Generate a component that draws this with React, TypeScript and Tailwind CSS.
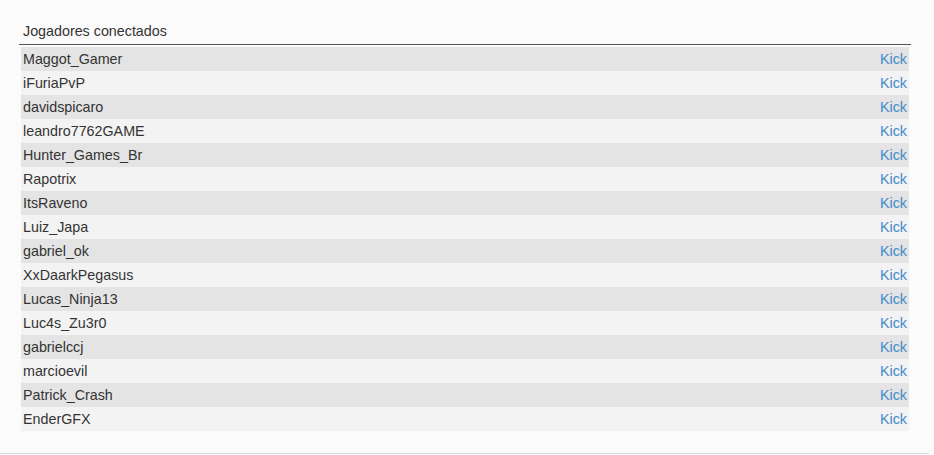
import React from "react";

const players = [
  "Maggot_Gamer",
  "iFuriaPvP",
  "davidspicaro",
  "leandro7762GAME",
  "Hunter_Games_Br",
  "Rapotrix",
  "ItsRaveno",
  "Luiz_Japa",
  "gabriel_ok",
  "XxDaarkPegasus",
  "Lucas_Ninja13",
  "Luc4s_Zu3r0",
  "gabrielccj",
  "marcioevil",
  "Patrick_Crash",
  "EnderGFX",
];

export default function App() {
  return (
    <div
      className="w-[934px] h-[455px] bg-[#fbfbfb] text-[#333] overflow-hidden"
      style={{ fontFamily: '"Liberation Sans", Arial, sans-serif' }}
    >
      <div className="w-[929px] h-[454px] border-b border-[#dcdcdc] pt-[21px]">
        <div className="ml-[19px] w-[892px]">
          <div className="px-[4px] h-[24px] leading-[20px] text-[14.3px] border-b border-[#555]">
            Jogadores conectados
          </div>
          <div className="mx-[2px] mt-[2px] flex flex-col">
            {players.map((p, i) => (
              <div
                key={p}
                className={`flex justify-between items-center h-[24px] px-[2px] text-[14.3px] leading-[20px] ${
                  i % 2 === 0 ? "bg-[#e4e4e4]" : "bg-[#f3f3f3]"
                }`}
              >
                <span>{p}</span>
                <span className="text-[#428bca]">Kick</span>
              </div>
            ))}
          </div>
        </div>
      </div>
    </div>
  );
}
